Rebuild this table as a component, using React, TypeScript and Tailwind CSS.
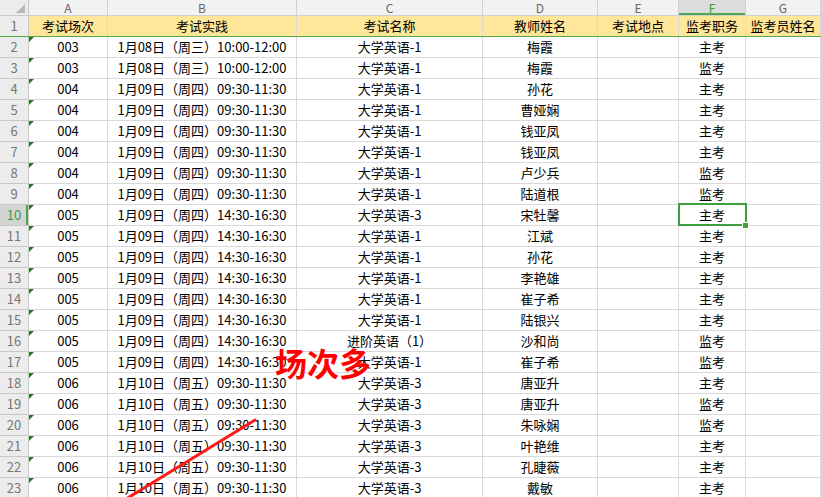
import React from 'react';

const COLS = ['A', 'B', 'C', 'D', 'E', 'F', 'G'];
const HEAD = ['考试场次', '考试实践', '考试名称', '教师姓名', '考试地点', '监考职务', '监考员姓名'];

const T1 = '1月08日（周三）10:00-12:00';
const T2 = '1月09日（周四）09:30-11:30';
const T3 = '1月09日（周四）14:30-16:30';
const T4 = '1月10日（周五）09:30-11:30';

const ROWS: string[][] = [
  ['003', T1, '大学英语-1', '梅霞', '主考'],
  ['003', T1, '大学英语-1', '梅霞', '监考'],
  ['004', T2, '大学英语-1', '孙花', '主考'],
  ['004', T2, '大学英语-1', '曹娅娴', '主考'],
  ['004', T2, '大学英语-1', '钱亚凤', '主考'],
  ['004', T2, '大学英语-1', '钱亚凤', '主考'],
  ['004', T2, '大学英语-1', '卢少兵', '监考'],
  ['004', T2, '大学英语-1', '陆道根', '监考'],
  ['005', T3, '大学英语-3', '宋牡馨', '主考'],
  ['005', T3, '大学英语-1', '江斌', '主考'],
  ['005', T3, '大学英语-1', '孙花', '主考'],
  ['005', T3, '大学英语-1', '李艳雄', '主考'],
  ['005', T3, '大学英语-1', '崔子希', '主考'],
  ['005', T3, '大学英语-1', '陆银兴', '主考'],
  ['005', T3, '进阶英语（1）', '沙和尚', '监考'],
  ['005', T3, '大学英语-1', '崔子希', '监考'],
  ['006', T4, '大学英语-3', '唐亚升', '主考'],
  ['006', T4, '大学英语-3', '唐亚升', '监考'],
  ['006', T4, '大学英语-3', '朱咏娴', '监考'],
  ['006', T4, '大学英语-3', '叶艳维', '主考'],
  ['006', T4, '大学英语-3', '孔睫薇', '主考'],
  ['006', T4, '大学英语-3', '戴敏', '主考'],
];

const grid = 'grid grid-cols-[29px_79px_189px_186px_115px_81px_67px_75px]';
const cell = 'h-[21px] border-r border-b border-[#d9d9d9] flex items-center justify-center whitespace-nowrap';

export default function App() {
  return (
    <div
      className="relative w-[821px] h-[497px] overflow-hidden bg-white text-[13px] text-black"
      style={{ fontFamily: "'Noto Sans CJK SC', 'Noto Sans', sans-serif" }}
    >
      {/* column letters */}
      <div className={grid}>
        <div className="relative h-[16px] bg-[#ececec] border-r border-b border-[#c8c8c8]">
          <div className="absolute right-[3px] bottom-[2px] w-0 h-0 border-b-[9px] border-l-[9px] border-b-[#b9b9b9] border-l-transparent" />
        </div>
        {COLS.map((c) => (
          <div
            key={c}
            className={`h-[16px] flex items-center justify-center text-[12px] leading-none border-r border-b border-[#d0d0d0] ${
              c === 'F'
                ? 'bg-[#dcdcdc] text-[#3a9d3a] shadow-[inset_0_-2px_0_#4ea64e]'
                : 'bg-[#f2f2f2] text-[#666]'
            }`}
          >
            {c}
          </div>
        ))}
      </div>

      {/* header row 1 */}
      <div className={`${grid} border-b border-[#55aa44]`}>
        <div className="h-[20px] bg-[#ececec] border-r border-[#c8c8c8] flex items-center justify-center text-[#777]">1</div>
        {HEAD.map((h) => (
          <div key={h} className="h-[20px] bg-[#ffe699] border-r border-[#d9d9d9] flex items-center justify-center whitespace-nowrap">
            {h}
          </div>
        ))}
      </div>

      {/* data rows */}
      {ROWS.map((r, i) => {
        const n = i + 2;
        const sel = n === 10;
        return (
          <div key={n} className={grid}>
            <div
              className={`h-[21px] flex items-center justify-center border-r border-b border-[#c8c8c8] ${
                sel
                  ? 'bg-[#d4d4d4] text-[#3a9d3a] shadow-[inset_-2px_0_0_#4ea64e]'
                  : 'bg-[#ececec] text-[#777]'
              }`}
            >
              {n}
            </div>
            <div className={`${cell} relative`}>
              <div className="absolute left-0 top-0 w-0 h-0 border-t-[5px] border-r-[5px] border-t-[#1f7a1f] border-r-transparent" />
              {r[0]}
            </div>
            <div className={cell}>{r[1]}</div>
            <div className={cell}>{r[2]}</div>
            <div className={cell}>{r[3]}</div>
            <div className={cell}></div>
            <div className={`${cell} relative ${sel ? 'z-10' : ''}`}>
              {sel && (
                <>
                  <div className="absolute left-[-1px] top-[-2px] right-[-2px] bottom-[-1px] border-2 border-[#3f9f3f]" />
                  <div className="absolute right-[-4px] bottom-[-4px] w-[7px] h-[7px] bg-[#3f9f3f] border border-white" />
                </>
              )}
              {r[4]}
            </div>
            <div className={cell}></div>
          </div>
        );
      })}

      {/* annotation */}
      <div className="absolute left-[275px] top-[346px] text-[32px] font-semibold leading-none text-[#ff0000]">
        场次多
      </div>
      <svg className="absolute left-0 top-0 pointer-events-none" width="821" height="497">
        <line x1="126" y1="499" x2="255" y2="420" stroke="#ff1a1a" strokeWidth="3" strokeLinecap="round" />
      </svg>
    </div>
  );
}
